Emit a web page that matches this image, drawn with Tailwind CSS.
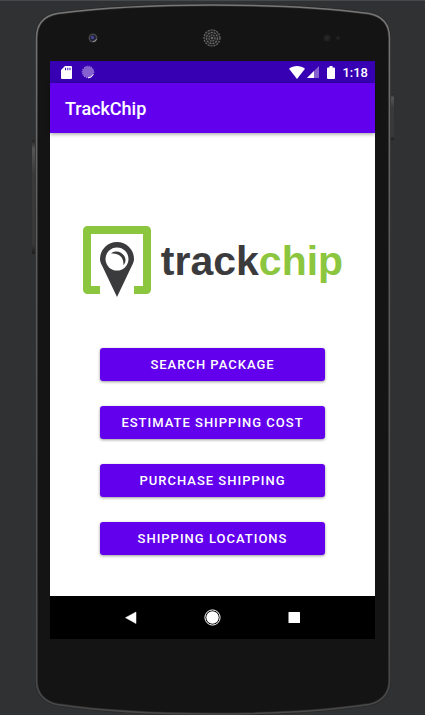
<!DOCTYPE html>
<html lang="en">
<head>
<meta charset="utf-8">
<meta name="viewport" content="width=device-width, initial-scale=1">
<title>TrackChip</title>
<script src="https://cdn.jsdelivr.net/npm/@tailwindcss/browser@4"></script>
</head>
<body class="bg-[#2f3133] font-[Roboto,sans-serif]">
<div class="relative flex min-h-screen flex-col px-[50px]">
  <!-- Phone body -->
  <svg class="absolute inset-0 h-full w-full" viewBox="0 0 425 715" preserveAspectRatio="none" aria-hidden="true">
    <defs>
      <linearGradient id="key" x1="0" y1="0" x2="0" y2="1">
        <stop offset="0" stop-color="#222"/><stop offset=".08" stop-color="#555"/><stop offset=".3" stop-color="#3a3a3a"/><stop offset=".92" stop-color="#383838"/><stop offset="1" stop-color="#1c1c1c"/>
      </linearGradient>
      <linearGradient id="rim" x1="0" y1="0" x2="0" y2="1">
        <stop offset="0" stop-color="#777"/><stop offset=".3" stop-color="#5c5c5f"/><stop offset="1" stop-color="#484848"/>
      </linearGradient>
    </defs>
    <path d="M0 .5H425" stroke="#464a4c"/>
    <rect x="32" y="140" width="4" height="114" rx="1" fill="url(#key)"/>
    <rect x="390" y="94" width="4" height="46" rx="1" fill="url(#key)"/>
    <path d="M36.500 38C36.500 23 44 16 57 13.500C103 7.500 158 5 213 5S323 7.500 369 13.500C382 16 389.500 23 389.500 38V681C389.500 694 381 702 369 704.500C322 711.500 268 714 213 714S104 711.500 57 704.500C45 702 36.500 694 36.500 681Z" fill="#141414" stroke="#292929" stroke-width="3"/>
    <path d="M36.500 38C36.500 23 44 16 57 13.500C103 7.500 158 5 213 5S323 7.500 369 13.500C382 16 389.500 23 389.500 38V681C389.500 694 381 702 369 704.500C322 711.500 268 714 213 714S104 711.500 57 704.500C45 702 36.500 694 36.500 681Z" fill="none" stroke="url(#rim)" stroke-width="1.500"/>
  </svg>

  <!-- Camera, speaker and sensors -->
  <div class="relative grid h-[61px] grid-cols-3 items-center pt-[14px]" aria-hidden="true">
    <svg class="ml-[38px] size-[10px]" viewBox="0 0 10 10"><circle cx="5" cy="5" r="4.500" fill="#45464b"/><circle cx="5" cy="5" r="3" fill="#202038"/><circle cx="4.500" cy="4.500" r="1.500" fill="#4b4b9c"/><path d="M5 8.500a3.500 3.500 0 0 0 3.500-2.500" fill="none" stroke="#999"/></svg>
    <svg class="size-[18px] justify-self-center" viewBox="0 0 18 18" fill="none" stroke="#6a6a6a" stroke-width="1.200"><circle cx="9" cy="9" r="8" fill="#222" stroke-dasharray="2 1"/><circle cx="9" cy="9" r="5.500" stroke-dasharray="2 1"/><circle cx="9" cy="9" r="3" stroke-dasharray="1.500 1"/><circle cx="9" cy="9" r=".6"/></svg>
    <svg class="mr-[34px] h-2 w-[18px] justify-self-end" viewBox="0 0 18 8"><circle cx="4" cy="4" r="3.500" fill="#202020"/><circle cx="4" cy="4" r="1.500" fill="#2a2a2a"/><circle cx="15" cy="4" r="2" fill="#202020"/></svg>
  </div>

  <div class="relative flex grow flex-col bg-white">
    <!-- Status bar -->
    <div class="flex h-[22px] items-center bg-[#3700b3] pr-[7px] pl-[11px] text-white">
      <svg class="h-[13px] w-[11px]" viewBox="0 0 11 13" role="img" aria-label="SD card"><path d="M4 0h6a1 1 0 0 1 1 1v11a1 1 0 0 1-1 1H1a1 1 0 0 1-1-1V4Z" fill="#fff"/><path d="M4.500 1.800v2.400M6.800 1.800v2.400M9 1.800v2.400" stroke="#3700b3"/></svg>
      <svg class="ml-[9px] size-[14px]" viewBox="0 0 14 14" fill="none" role="img" aria-label="Syncing"><circle cx="7" cy="7" r="5.500" fill="#8561d0"/><circle cx="7" cy="7" r="5.800" stroke="#b9a5e6" stroke-dasharray="1 1"/><path d="M12.300 9.300A5.800 5.800 0 0 1 7 12.800" stroke="#fff"/></svg>
      <svg class="ml-auto h-[13px] w-4" viewBox="0 0 16 13" role="img" aria-label="Wi-Fi"><path d="M0 2.800C4.500-.8 11.500-.8 16 2.800L8 13Z" fill="#fff"/></svg>
      <svg class="ml-[2px] size-3" viewBox="0 0 12 12" role="img" aria-label="Signal"><path d="M12 0V12H0Z" fill="#8561d0"/><path d="M7 5V12H0Z" fill="#fff"/></svg>
      <svg class="ml-2 h-[13px] w-2" viewBox="0 0 8 13" role="img" aria-label="Battery"><path d="M2.500 0h3v1.500H7a1 1 0 0 1 1 1V12a1 1 0 0 1-1 1H1a1 1 0 0 1-1-1V2.500a1 1 0 0 1 1-1h1.500Z" fill="#fff"/></svg>
      <time class="ml-[7px] text-[13px] leading-none font-medium">1:18</time>
    </div>
    <header class="flex h-[50px] items-center bg-[#6200ee] px-[15px] shadow-[0_1px_4px_rgba(0,0,0,0.4)]">
      <h1 class="text-[18px] font-medium text-white">TrackChip</h1>
    </header>

    <main class="flex grow flex-col items-center pt-[92px]">
      <div class="flex h-[73px] items-start gap-[10px]">
        <svg class="h-[73px] w-[69px] shrink-0" viewBox="0 0 69 73" aria-hidden="true">
          <path d="M18 69H5.500A4.500 4.500 0 0 1 1 64.500V5.500A4.500 4.500 0 0 1 5.500 1H64.500A4.500 4.500 0 0 1 69 5.500V64.500a4.500 4.500 0 0 1-4.500 4.500H52V61h9V9H9V61h9Z" fill="#8cc63f"/>
          <path d="M35 72L20.500 41.500C18.700 38 18 36 18 34a17 17 0 0 1 34 0c0 2-.7 4-2.500 7.500Z" fill="#3b3b3d"/>
          <circle cx="35" cy="34" r="11.500" fill="#fff"/>
          <path d="M29 28.500C35 23.500 44 29 43.500 35.500c-.2 2-1 3.500-2.200 4.700 1-7-4-12.700-12.300-11.700Z" fill="#3b3b3d"/>
        </svg>
        <p class="pt-[14px] font-['Liberation_Sans',Arial,sans-serif] text-[41px] leading-[44px] font-bold text-[#3b3b3d]">track<span class="text-[#8cc63f]">chip</span></p>
      </div>
      <nav class="mt-[50px] flex w-full flex-col gap-[25px] px-[50px]">
        <button class="h-[33px] rounded-[3px] bg-[#6200ee] text-[13px] font-medium tracking-[1px] whitespace-nowrap text-white shadow-[0_1px_3px_rgba(0,0,0,0.4)]">SEARCH PACKAGE</button>
        <button class="h-[33px] rounded-[3px] bg-[#6200ee] text-[13px] font-medium tracking-[1px] whitespace-nowrap text-white shadow-[0_1px_3px_rgba(0,0,0,0.4)]">ESTIMATE SHIPPING COST</button>
        <button class="h-[33px] rounded-[3px] bg-[#6200ee] text-[13px] font-medium tracking-[1px] whitespace-nowrap text-white shadow-[0_1px_3px_rgba(0,0,0,0.4)]">PURCHASE SHIPPING</button>
        <button class="h-[33px] rounded-[3px] bg-[#6200ee] text-[13px] font-medium tracking-[1px] whitespace-nowrap text-white shadow-[0_1px_3px_rgba(0,0,0,0.4)]">SHIPPING LOCATIONS</button>
      </nav>
    </main>

    <div class="flex h-[43px] items-center justify-center gap-16 bg-black">
      <button aria-label="Back"><svg class="size-[18px]" viewBox="0 0 18 18"><path d="M14 3V14.500L3.500 8.700Z" fill="#fff" stroke="#fff" stroke-width=".5"/></svg></button>
      <button aria-label="Home"><svg class="size-[18px]" viewBox="0 0 18 18"><circle cx="8.500" cy="8.500" r="7.600" fill="none" stroke="#fff"/><circle cx="8.500" cy="8.500" r="6.200" fill="#fff"/></svg></button>
      <button aria-label="Recent apps"><svg class="size-[18px]" viewBox="0 0 18 18"><rect x="2.500" y="3" width="11.500" height="11" rx=".5" fill="#fff"/></svg></button>
    </div>
  </div>
  <div class="h-[76px]"></div>
</div>
</body>
</html>
